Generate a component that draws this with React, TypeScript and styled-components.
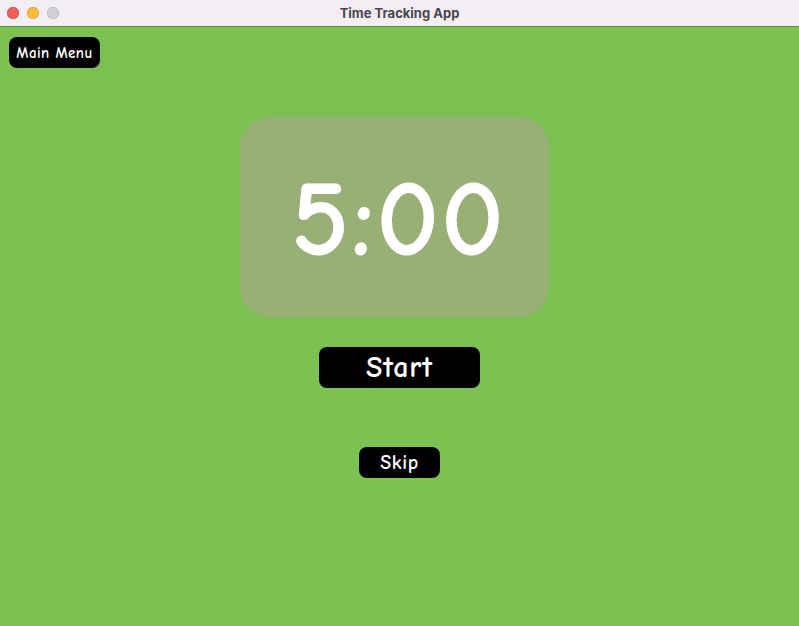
import React from "react";
import styled, { createGlobalStyle } from "styled-components";

const Global = createGlobalStyle`
  html, body { margin: 0; padding: 0; }
  body { width: 799px; height: 626px; overflow: hidden; font-family: "Comic Sans MS", "Comic Neue", "DejaVu Sans", sans-serif; }
`;

const Window = styled.div`
  width: 799px;
  height: 626px;
  display: flex;
  flex-direction: column;
  background: #7dc152;
`;

const TitleBar = styled.div`
  height: 27px;
  flex: none;
  background: #f2eef4;
  border-bottom: 1px solid #5f8f42;
  box-sizing: border-box;
  display: grid;
  grid-template-columns: 1fr auto 1fr;
  align-items: center;
  padding: 0 7px;
`;

const Lights = styled.div`
  display: flex;
  gap: 8px;
`;

const Light = styled.span<{ $c: string; $b: string }>`
  width: 12px;
  height: 12px;
  border-radius: 50%;
  background: ${(p) => p.$c};
  box-shadow: inset 0 0 0 0.5px ${(p) => p.$b};
`;

const Title = styled.div`
  font-family: "Inter", "Liberation Sans", sans-serif;
  font-weight: 700;
  font-size: 13px;
  color: #4a464e;
`;

const Content = styled.div`
  flex: 1;
  display: flex;
  flex-direction: column;
  align-items: center;
  padding-top: 10px;
`;

const MenuRow = styled.div`
  align-self: stretch;
  display: flex;
  padding-left: 9px;
`;

const Button = styled.button<{ $w: number; $h: number; $fs: number }>`
  width: ${(p) => p.$w}px;
  height: ${(p) => p.$h}px;
  background: #000;
  color: #fff;
  border: none;
  border-radius: 8px;
  font-family: "Comic Sans MS", "Comic Neue", "DejaVu Sans", sans-serif;
  font-weight: 700;
  font-size: ${(p) => p.$fs}px;
  letter-spacing: 0.03em;
  padding: 0;
  display: flex;
  align-items: center;
  justify-content: center;
  cursor: pointer;
`;

const TimerBox = styled.div`
  margin-top: 49px;
  margin-right: 10px;
  width: 309px;
  height: 200px;
  border-radius: 30px;
  background: #98af75;
  display: flex;
  align-items: center;
  justify-content: center;
`;

const TimerText = styled.div`
  font-family: "Comic Sans MS", "Comic Neue", "DejaVu Sans", sans-serif;
  font-weight: 700;
  font-size: 110px;
  color: #fff;
  letter-spacing: 2px;
  line-height: 1;
  margin-left: 8px;
  margin-top: 6px;
`;

const StartWrap = styled.div`
  margin-top: 30px;
`;

const SkipWrap = styled.div`
  margin-top: 59px;
`;

export default function App() {
  return (
    <>
      <Global />
      <Window>
        <TitleBar>
          <Lights>
            <Light $c="#ee5f57" $b="#d24a42" />
            <Light $c="#f7bb3e" $b="#d89d2c" />
            <Light $c="#d3d0d6" $b="#b7b3ba" />
          </Lights>
          <Title>Time Tracking App</Title>
          <span />
        </TitleBar>
        <Content>
          <MenuRow>
            <Button $w={91} $h={31} $fs={15}>Main Menu</Button>
          </MenuRow>
          <TimerBox>
            <TimerText>5:00</TimerText>
          </TimerBox>
          <StartWrap>
            <Button $w={161} $h={41} $fs={30}>Start</Button>
          </StartWrap>
          <SkipWrap>
            <Button $w={81} $h={31} $fs={20}>Skip</Button>
          </SkipWrap>
        </Content>
      </Window>
    </>
  );
}
